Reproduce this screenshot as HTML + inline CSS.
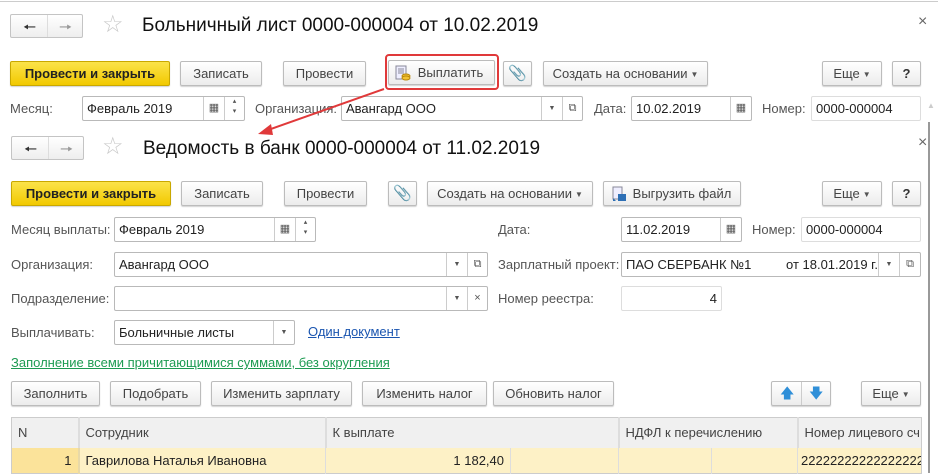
<!DOCTYPE html>
<html><head><meta charset="utf-8">
<style>
*{box-sizing:border-box;margin:0;padding:0}
body{width:938px;height:473px;overflow:hidden;background:#fff;font-family:"Liberation Sans",Arial,sans-serif;font-size:13px;color:#333;position:relative}
.a{position:absolute}
.btn{position:absolute;height:25px;border:1px solid #bcbcbc;border-radius:2px;background:linear-gradient(#fff,#ececec);box-shadow:0 1px 1px rgba(0,0,0,.18);text-align:center;line-height:23px;color:#444;white-space:nowrap}
.y{background:linear-gradient(#fbe34a,#f2c900);border-color:#c9a800;color:#222;font-weight:bold}
.fld{position:absolute;height:25px;border:1px solid #b9b9b9;border-radius:2px;background:#fff;line-height:23px;padding-left:4px;color:#222;white-space:nowrap}
.seg{position:absolute;top:0;height:23px;border-left:1px solid #ccc;text-align:center;font-size:7px;color:#555}
.lbl{position:absolute;color:#555;line-height:16px}
.title{position:absolute;font-size:19px;color:#111}
.x{position:absolute;font-size:16px;color:#666}
.nav{position:absolute;width:73px;height:24px;border:1px solid #c4c4c4;border-radius:2px;background:linear-gradient(#fff,#eee)}
.nav span{position:absolute;top:2px;font-size:15px}
.star{position:absolute;font-size:24px;color:#c8c8c8}
.t{font-size:8px;color:#555;vertical-align:1px;margin-left:3px}
td{border-right:1px solid #ddd;padding:0 6px;white-space:nowrap;overflow:hidden}
</style></head><body>
<div class="a" style="left:0;top:0;width:938px;height:2px;border-bottom:1px solid #ccc"></div>

<div class="nav" style="left:10px;top:14px"><span style="left:12px;color:#333">&#129044;</span><div class="a" style="left:36px;top:0;height:22px;border-left:1px solid #ddd"></div><span style="left:48px;color:#999">&#129046;</span></div>
<div class="star" style="left:102px;top:10px">☆</div>
<div class="title" style="left:142px;top:15px">Больничный лист 0000-000004 от 10.02.2019</div>
<div class="x" style="left:918px;top:13px">×</div>

<div class="btn y" style="left:10px;top:61px;width:160px">Провести и закрыть</div>
<div class="btn" style="left:180px;top:61px;width:82px">Записать</div>
<div class="btn" style="left:283px;top:61px;width:83px">Провести</div>
<div class="a" style="left:385px;top:54px;width:114px;height:36px;border:2px solid #e0393a;border-radius:4px"></div>
<div class="btn" style="left:388px;top:60px;width:107px;padding-left:18px">Выплатить</div>
<svg class="a" style="left:395px;top:65px" width="16" height="16"><rect x="1" y="1" width="10" height="13" fill="#eef" stroke="#889"/><path d="M3 4h6M3 6h6M3 8h6" stroke="#889"/><ellipse cx="11" cy="11" rx="4" ry="2" fill="#f1c232" stroke="#b8860b"/><ellipse cx="11" cy="13" rx="4" ry="2" fill="#f1c232" stroke="#b8860b"/></svg>
<div class="btn" style="left:503px;top:61px;width:29px;font-size:15px;color:#888">&#128206;</div>
<div class="btn" style="left:543px;top:61px;width:165px">Создать на основании<span class="t">▼</span></div>
<div class="btn" style="left:822px;top:61px;width:60px">Еще<span class="t">▼</span></div>
<div class="btn" style="left:892px;top:61px;width:29px;font-weight:bold;color:#333">?</div>

<div class="lbl" style="left:10px;top:101px">Месяц:</div>
<div class="fld" style="left:82px;top:96px;width:163px">Февраль 2019<div class="seg" style="left:120px;width:21px;font-size:11px">▦</div><div class="seg" style="left:141px;width:20px;line-height:10px;font-size:7px">▴<br>▾</div></div>
<div class="lbl" style="left:255px;top:101px">Организация:</div>
<div class="fld" style="left:341px;top:96px;width:242px">Авангард ООО<div class="seg" style="left:199px;width:21px">▼</div><div class="seg" style="left:220px;width:20px;font-size:11px">⧉</div></div>
<div class="lbl" style="left:594px;top:101px">Дата:</div>
<div class="fld" style="left:631px;top:96px;width:121px">10.02.2019<div class="seg" style="left:98px;width:21px;font-size:11px">▦</div></div>
<div class="lbl" style="left:762px;top:101px">Номер:</div>
<div class="fld" style="left:811px;top:96px;width:110px;border-color:#ddd">0000-000004</div>
<div class="a" style="left:927px;top:101px;font-size:8px;color:#ccc">▲</div>

<div class="a" style="left:0;top:122px;width:930px;height:351px;background:#fff;border-right:2px solid #999"></div>
<svg class="a" style="left:0;top:0" width="938" height="473"><line x1="384" y1="89" x2="268" y2="130" stroke="#e0393a" stroke-width="2"/><path d="M258 134 L271 124 L273 135 Z" fill="#e0393a"/></svg>
<div class="nav" style="left:11px;top:136px"><span style="left:12px;color:#333">&#129044;</span><div class="a" style="left:36px;top:0;height:22px;border-left:1px solid #ddd"></div><span style="left:48px;color:#999">&#129046;</span></div>
<div class="star" style="left:102px;top:132px">☆</div>
<div class="title" style="left:143px;top:138px">Ведомость в банк 0000-000004 от 11.02.2019</div>
<div class="x" style="left:918px;top:134px">×</div>

<div class="btn y" style="left:11px;top:181px;width:160px">Провести и закрыть</div>
<div class="btn" style="left:181px;top:181px;width:82px">Записать</div>
<div class="btn" style="left:284px;top:181px;width:83px">Провести</div>
<div class="btn" style="left:388px;top:181px;width:29px;font-size:15px;color:#888">&#128206;</div>
<div class="btn" style="left:427px;top:181px;width:166px">Создать на основании<span class="t">▼</span></div>
<div class="btn" style="left:603px;top:181px;width:138px;padding-left:20px">Выгрузить файл</div>
<svg class="a" style="left:611px;top:186px" width="16" height="16"><rect x="2" y="1" width="9" height="12" fill="#eef" stroke="#889"/><rect x="7" y="8" width="8" height="7" fill="#2d6fb5"/><path d="M2 12 l3 3 l-3 0z" fill="#2d6fb5"/></svg>
<div class="btn" style="left:822px;top:181px;width:60px">Еще<span class="t">▼</span></div>
<div class="btn" style="left:892px;top:181px;width:29px;font-weight:bold;color:#333">?</div>

<div class="lbl" style="left:11px;top:222px">Месяц выплаты:</div>
<div class="fld" style="left:114px;top:217px;width:202px">Февраль 2019<div class="seg" style="left:159px;width:21px;font-size:11px">▦</div><div class="seg" style="left:180px;width:20px;line-height:10px;font-size:7px">▴<br>▾</div></div>
<div class="lbl" style="left:498px;top:222px">Дата:</div>
<div class="fld" style="left:621px;top:217px;width:121px">11.02.2019<div class="seg" style="left:98px;width:21px;font-size:11px">▦</div></div>
<div class="lbl" style="left:752px;top:222px">Номер:</div>
<div class="fld" style="left:801px;top:217px;width:120px;border-color:#ddd">0000-000004</div>

<div class="lbl" style="left:11px;top:257px">Организация:</div>
<div class="fld" style="left:114px;top:252px;width:374px">Авангард ООО<div class="seg" style="left:331px;width:21px">▼</div><div class="seg" style="left:352px;width:20px;font-size:11px">⧉</div></div>
<div class="lbl" style="left:498px;top:257px">Зарплатный проект:</div>
<div class="fld" style="left:621px;top:252px;width:300px">ПАО СБЕРБАНК №1<span class="a" style="left:164px;top:0">от 18.01.2019 г.</span><div class="seg" style="left:256px;width:21px;background:#fff">▼</div><div class="seg" style="left:277px;width:21px;font-size:11px">⧉</div></div>

<div class="lbl" style="left:11px;top:291px">Подразделение:</div>
<div class="fld" style="left:114px;top:286px;width:374px"><div class="seg" style="left:331px;width:21px">▼</div><div class="seg" style="left:352px;width:20px;font-size:11px">×</div></div>
<div class="lbl" style="left:498px;top:291px">Номер реестра:</div>
<div class="fld" style="left:621px;top:286px;width:101px;border-color:#ddd;text-align:right;padding-right:4px">4</div>

<div class="lbl" style="left:11px;top:325px">Выплачивать:</div>
<div class="fld" style="left:114px;top:320px;width:181px">Больничные листы<div class="seg" style="left:158px;width:21px">▼</div></div>
<div class="lbl" style="left:308px;top:324px;color:#1a55b0;text-decoration:underline">Один документ</div>
<div class="lbl" style="left:11px;top:355px;color:#1d9b52;text-decoration:underline">Заполнение всеми причитающимися суммами, без округления</div>

<div class="btn" style="left:11px;top:381px;width:89px">Заполнить</div>
<div class="btn" style="left:110px;top:381px;width:91px">Подобрать</div>
<div class="btn" style="left:211px;top:381px;width:141px">Изменить зарплату</div>
<div class="btn" style="left:362px;top:381px;width:125px">Изменить налог</div>
<div class="btn" style="left:493px;top:381px;width:121px">Обновить налог</div>
<div class="btn" style="left:771px;top:381px;width:60px"><div class="a" style="left:29px;top:0;height:23px;border-left:1px solid #ccc"></div><span class="a" style="left:8px;top:0;color:#2f8fd8;font-size:14px">🡅</span><span class="a" style="left:37px;top:0;color:#2f8fd8;font-size:14px">🡇</span></div>
<div class="btn" style="left:861px;top:381px;width:60px">Еще<span class="t">▼</span></div>

<table class="a" style="left:11px;top:417px;width:910px;border-collapse:collapse;table-layout:fixed;border:1px solid #ccc;color:#444">
<colgroup><col style="width:67px"><col style="width:247px"><col style="width:185px"><col style="width:108px"><col style="width:93px"><col style="width:86px"><col style="width:124px"></colgroup>
<tr style="height:30px;background:#f0f0f0"><td style="border-right:2px solid #ddd">N</td><td style="border-right:2px solid #ddd">Сотрудник</td><td colspan="2" style="border-right:2px solid #ddd">К выплате</td><td colspan="2" style="border-right:2px solid #ddd">НДФЛ к перечислению</td><td style="border-right:none">Номер лицевого сч</td></tr>
<tr style="height:26px;background:#fdf1c6;color:#222"><td style="background:#fbe39a;text-align:right;border-right:2px solid #e8d9a8">1</td><td>Гаврилова Наталья Ивановна</td><td style="text-align:right">1 182,40</td><td></td><td></td><td></td><td style="border-right:none;padding:0 3px">22222222222222222</td></tr>
</table>
</body></html>
